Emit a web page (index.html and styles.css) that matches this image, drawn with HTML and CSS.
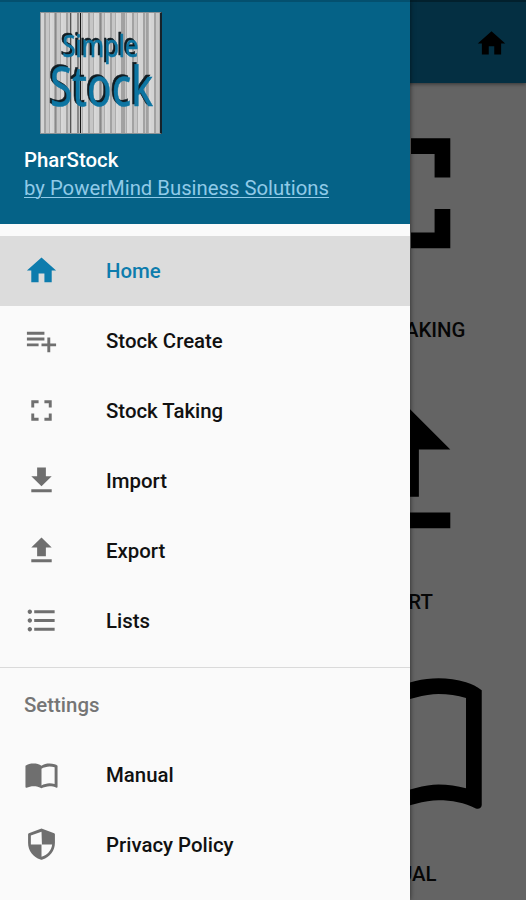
FILE: index.html
```
<!DOCTYPE html>
<html lang="en">
<head>
    <meta charset="UTF-8">
    <meta name="viewport" content="width=device-width, initial-scale=1.0">
    <title>PharStock</title>
    <link rel="stylesheet" href="styles.css">
</head>
<body>
    <div class="app">
        <header class="toolbar">
            <svg class="toolbar-icon" viewBox="0 0 24 24"><path d="M10 20v-6h4v6h5v-8h3L12 3 2 12h3v8z"/></svg>
        </header>
        <main class="tiles">
            <div class="tile">
                <svg class="tile-icon" viewBox="0 0 24 24"><path d="M7 14H5v5h5v-2H7v-3zm-2-4h2V7h3V5H5v5zm12 7h-3v2h5v-5h-2v3zM14 5v2h3v3h2V5h-5z"/></svg>
                <span class="tile-label">STOCK TAKING</span>
            </div>
            <div class="tile">
                <svg class="tile-icon" viewBox="0 0 24 24"><path d="M9 16h6v-6h4l-7-7-7 7h4zm-4 2h14v2H5z"/></svg>
                <span class="tile-label">EXPORT</span>
            </div>
            <div class="tile">
                <svg class="tile-icon" viewBox="0 0 24 24"><path d="M21 5c-1.11-.35-2.33-.5-3.5-.5-1.95 0-4.05.4-5.5 1.5-1.45-1.1-3.55-1.5-5.5-1.5S2.45 4.9 1 6v14.65c0 .25.25.5.5.5.1 0 .15-.05.25-.05C3.1 20.45 5.05 20 6.5 20c1.95 0 4.05.4 5.5 1.5 1.35-.85 3.8-1.5 5.5-1.5 1.65 0 3.35.3 4.75 1.05.1.05.15.05.25.05.25 0 .5-.25.5-.5V6c-.6-.45-1.25-.75-2-1zm0 13.5c-1.1-.35-2.3-.5-3.5-.5-1.7 0-4.15.65-5.5 1.5V8c1.35-.85 3.8-1.5 5.5-1.5 1.2 0 2.4.15 3.5.5v11.5z"/></svg>
                <span class="tile-label">MANUAL</span>
            </div>
        </main>
    </div>

    <div class="scrim"></div>

    <aside class="drawer">
        <div class="drawer-header">
            <div class="logo">
                <svg viewBox="0 0 122 122">
                    <g class="logo-text">
                        <text x="22.5" y="44.5" font-size="31" textLength="76" lengthAdjust="spacingAndGlyphs">Simple</text>
                        <text x="10" y="93.5" font-size="54" textLength="103" lengthAdjust="spacingAndGlyphs">Stock</text>
                    </g>
                </svg>
            </div>
            <div class="app-name">PharStock</div>
            <a class="company" href="#">by PowerMind Business Solutions</a>
        </div>

        <nav class="menu">
            <a class="item active" href="#">
                <svg viewBox="0 0 24 24"><path d="M10 20v-6h4v6h5v-8h3L12 3 2 12h3v8z"/></svg>
                <span>Home</span>
            </a>
            <a class="item" href="#">
                <svg viewBox="0 0 24 24"><path d="M14 10H2v2h12v-2zm0-4H2v2h12V6zm4 8v-4h-2v4h-4v2h4v4h2v-4h4v-2h-4zM2 16h8v-2H2v2z"/></svg>
                <span>Stock Create</span>
            </a>
            <a class="item" href="#">
                <svg viewBox="0 0 24 24"><path d="M7 14H5v5h5v-2H7v-3zm-2-4h2V7h3V5H5v5zm12 7h-3v2h5v-5h-2v3zM14 5v2h3v3h2V5h-5z"/></svg>
                <span>Stock Taking</span>
            </a>
            <a class="item" href="#">
                <svg viewBox="0 0 24 24"><path d="M19 9h-4V3H9v6H5l7 7 7-7zM5 18v2h14v-2H5z"/></svg>
                <span>Import</span>
            </a>
            <a class="item" href="#">
                <svg viewBox="0 0 24 24"><path d="M9 16h6v-6h4l-7-7-7 7h4zm-4 2h14v2H5z"/></svg>
                <span>Export</span>
            </a>
            <a class="item" href="#">
                <svg viewBox="0 0 24 24"><path d="M4 10.5c-.83 0-1.5.67-1.5 1.5s.67 1.5 1.5 1.5 1.5-.67 1.5-1.5-.67-1.5-1.5-1.5zm0-6c-.83 0-1.5.67-1.5 1.5S3.17 7.5 4 7.5 5.5 6.83 5.5 6 4.83 4.5 4 4.5zm0 12c-.83 0-1.5.68-1.5 1.5s.68 1.5 1.5 1.5 1.5-.68 1.5-1.5-.67-1.5-1.5-1.5zM7 19h14v-2H7v2zm0-6h14v-2H7v2zm0-8v2h14V5H7z"/></svg>
                <span>Lists</span>
            </a>
        </nav>

        <nav class="menu settings">
            <div class="menu-title">Settings</div>
            <a class="item" href="#">
                <svg viewBox="0 0 24 24"><path d="M21 5c-1.11-.35-2.33-.5-3.5-.5-1.95 0-4.05.4-5.5 1.5-1.45-1.1-3.55-1.5-5.5-1.5S2.45 4.9 1 6v14.65c0 .25.25.5.5.5.1 0 .15-.05.25-.05C3.1 20.45 5.05 20 6.5 20c1.95 0 4.05.4 5.5 1.5 1.35-.85 3.8-1.5 5.5-1.5 1.65 0 3.35.3 4.75 1.05.1.05.15.05.25.05.25 0 .5-.25.5-.5V6c-.6-.45-1.25-.75-2-1zm0 13.5c-1.1-.35-2.3-.5-3.5-.5-1.7 0-4.15.65-5.5 1.5V8c1.35-.85 3.8-1.5 5.5-1.5 1.2 0 2.4.15 3.5.5v11.5z"/></svg>
                <span>Manual</span>
            </a>
            <a class="item" href="#">
                <svg viewBox="0 0 24 24"><path d="M12 1.1L3.3 4.2c-.3.1-.5.4-.5.7v6.1c0 5.3 3.5 9.6 8.5 11.3.5.2.9.2 1.4 0 5-1.7 8.5-6 8.5-11.3V4.9c0-.3-.2-.6-.5-.7zm.3 10.9h7c-.5 4-3.2 7.2-7.3 8.4V12H4.7V5.8L12 3.2z"/></svg>
                <span>Privacy Policy</span>
            </a>
        </nav>
    </aside>
</body>
</html>
```
FILE: styles.css
```
* {
    box-sizing: border-box;
}
body {
    margin: 0;
    height: 900px;
    position: relative;
    overflow: hidden;
    background: #fafafa;
    font-family: Roboto, sans-serif;
    font-size: 20.4px;
    font-weight: 500;
    line-height: 28px;
    color: #111;
}
a {
    color: inherit;
    text-decoration: none;
}

/* main screen */
.toolbar {
    height: 83px;
    padding: 2px 18px 0 0;
    display: flex;
    align-items: center;
    justify-content: flex-end;
    background: #0a76a5;
    border-top: 2px solid #075070;
    box-shadow: 0 1px 4px rgba(0,0,0,0.5);
}
.toolbar-icon {
    width: 33px;
    height: 33px;
}
.tiles {
    display: flex;
    flex-direction: column;
    align-items: flex-end;
    padding-top: 15.5px;
}
.tile {
    width: 262.4px;
    height: 272.2px;
    display: flex;
    flex-direction: column;
    align-items: center;
}
.tile-icon {
    width: 188.6px;
    height: 188.6px;
    flex-shrink: 0;
}
.tile-label {
    margin-top: 28.5px;
    white-space: nowrap;
}

.scrim {
    position: absolute;
    inset: 0;
    background: rgba(0,0,0,0.6);
}

/* drawer */
.drawer {
    position: absolute;
    top: 0;
    left: 0;
    width: 409.5px;
    height: 900px;
    background: #fafafa;
    box-shadow: 0 0 5px rgba(0,0,0,0.6);
}
.drawer-header {
    height: 223.5px;
    padding: 10px 24px 0;
    background: #056287;
    border-top: 2px solid #04506f;
}
.logo {
    width: 122px;
    height: 122px;
    margin: 0 0 12px 16px;
    border: 1px solid #8a9296;
    border-right: 2px solid #16222a;
    background:
        linear-gradient(90deg, transparent 29px, #555 29px, #555 30.5px, transparent 30.5px, transparent 39px, #151515 39px, #151515 40.5px, transparent 40.5px),
        repeating-linear-gradient(90deg, transparent 0, transparent 13px, rgba(90,90,90,0.35) 13px, rgba(90,90,90,0.35) 15px, transparent 15px, transparent 23px),
        repeating-linear-gradient(90deg, #d4d4d4 0, #d4d4d4 3px, #a2a2a2 3px, #a2a2a2 5px, #c6c6c6 5px, #c6c6c6 8px, #adadad 8px, #adadad 9px, #d8d8d8 9px, #d8d8d8 11px);
}
.logo svg {
    display: block;
    width: 122px;
    height: 122px;
    margin: -1px;
    overflow: visible;
    font-family: "Noto Sans", sans-serif;
    font-weight: 400;
}
.logo-text {
    fill: #0d75a2;
    stroke: #0d75a2;
    stroke-width: 0.6px;
    filter: drop-shadow(-1.5px -1.5px 0 #101c22);
}
.app-name {
    color: #fff;
}
.company {
    display: block;
    font-size: 20.3px;
    font-weight: 400;
    color: #90cae8;
    text-decoration: underline;
    text-decoration-thickness: 1px;
    text-underline-offset: 2px;
    white-space: nowrap;
}
.menu {
    padding: 12px 0 11px;
}
.item {
    height: 70px;
    padding-left: 24px;
    display: flex;
    align-items: center;
    gap: 47px;
}
.item svg {
    width: 35px;
    height: 35px;
    fill: #6f6f6f;
}
.active {
    background: #dcdcdc;
    color: #0d7cad;
}
.active svg {
    fill: #0d7cad;
}
.settings {
    padding: 0;
    border-top: 1px solid #dadada;
}
.menu-title {
    padding: 23px 24px 21px;
    color: #757575;
}
```
